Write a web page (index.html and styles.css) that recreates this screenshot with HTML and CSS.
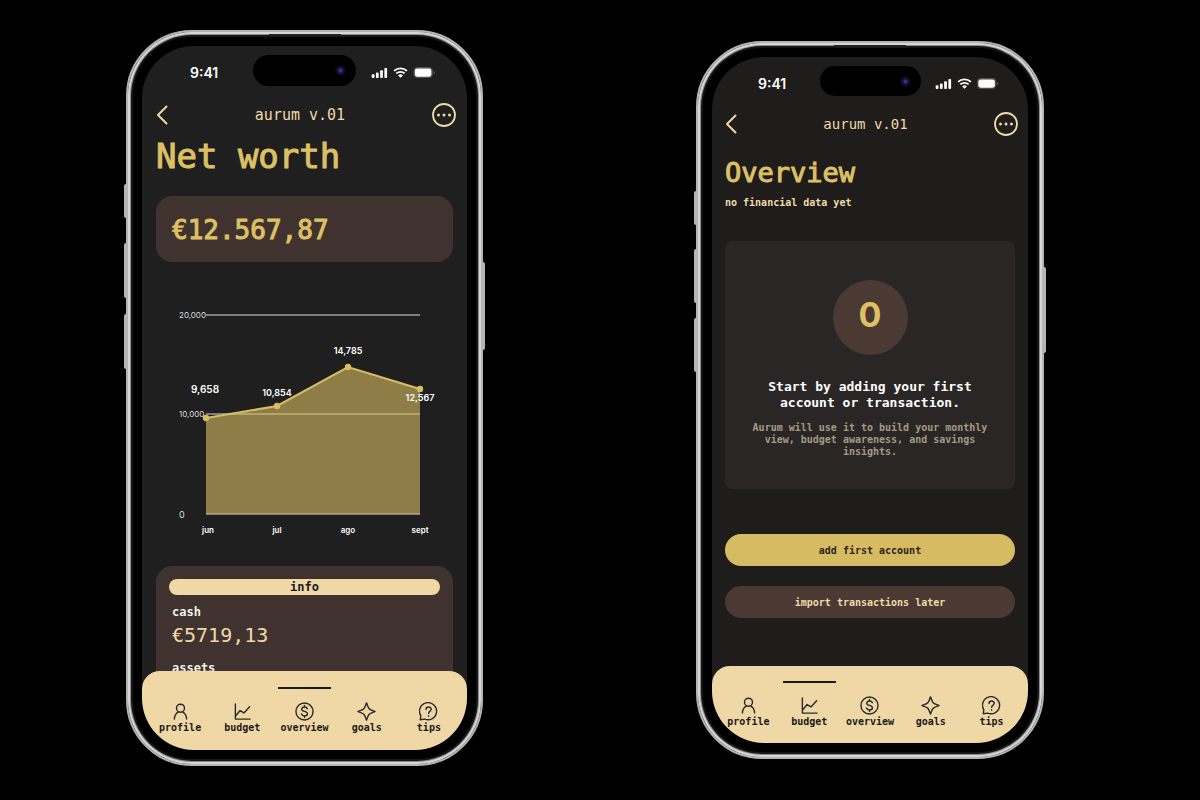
FILE: index.html
```html
<!DOCTYPE html>
<html lang="en">
<head>
    <meta charset="UTF-8">
    <meta name="viewport" content="width=device-width, initial-scale=1.0">
    <title>aurum v.01</title>
    <link rel="stylesheet" href="styles.css">
</head>
<body>

    <!-- shared icons -->
    <svg class="sprite" xmlns="http://www.w3.org/2000/svg">
        <symbol id="signal" viewBox="0 0 17 12"><rect x="0" y="8" width="3" height="4" rx="1"/><rect x="4.6" y="6" width="3" height="6" rx="1"/><rect x="9.2" y="3.5" width="3" height="8.5" rx="1"/><rect x="13.8" y="1" width="3" height="11" rx="1"/></symbol>
        <symbol id="wifi" viewBox="0 0 16 12"><path d="M1 4.2a10.4 10.4 0 0 1 14 0M3.5 7a6.6 6.6 0 0 1 9 0" fill="none" stroke="#fff" stroke-width="2"/><path d="M8 11.8 5.4 9.2a3.8 3.8 0 0 1 5.2 0z"/></symbol>
        <symbol id="battery" viewBox="0 0 24 12"><rect x=".5" y=".5" width="20" height="11" rx="3.4" fill="#444" stroke="#555"/><rect x="1.500" y="1.500" width="18" height="9" rx="2.500"/><path d="M22 4v4c1.6-.7 1.6-3.3 0-4z" fill="#666"/></symbol>
        <symbol id="back" viewBox="0 0 12 20"><path d="M10.5 1.5 2 10l8.500 8.500" fill="none" stroke="currentColor" stroke-width="2" stroke-linecap="round" stroke-linejoin="round"/></symbol>
        <symbol id="more" viewBox="0 0 24 24"><circle cx="12" cy="12" r="11" fill="none" stroke="currentColor" stroke-width="1.800"/><g fill="currentColor"><circle cx="6.500" cy="12" r="1.500"/><circle cx="12" cy="12" r="1.500"/><circle cx="17.500" cy="12" r="1.500"/></g></symbol>
        <symbol id="profile" viewBox="0 0 20 20"><circle cx="10" cy="6.500" r="4.200"/><path d="M3.600 18c0-4 1.600-6.300 4.400-7.700M16.400 18c0-4-1.600-6.300-4.400-7.700"/></symbol>
        <symbol id="budget" viewBox="0 0 20 20"><path d="M2.500 2v16H18M2.500 15l5-6 4 2.500 6-6.500"/></symbol>
        <symbol id="overview" viewBox="0 0 20 20"><circle cx="10" cy="10" r="9"/><path d="M13 7c-.4-1.200-1.500-1.700-3-1.700-1.700 0-2.900.8-2.900 2.200 0 3.200 6 1.600 6 4.800 0 1.500-1.300 2.300-3.100 2.300-1.700 0-2.800-.7-3.200-2M10 3.600v1.600M10 14.700v1.600"/></symbol>
        <symbol id="goals" viewBox="0 0 20 20"><path d="M10 1c.8 1.500 1.300 4 2.600 5.800C14 8.600 17.500 9 19 10c-1.500 1-5 1.400-6.400 3.200C11.300 15 10.800 17.500 10 19c-.8-1.500-1.300-4-2.600-5.800C6 11.400 2.500 11 1 10c1.500-1 5-1.400 6.400-3.200C8.700 5 9.200 2.500 10 1z"/></symbol>
        <symbol id="tips" viewBox="0 0 20 20"><path d="M1.300 18.700l.6-4.200A9 9 0 1 1 6 18z"/><path d="M7.400 8c0-3.700 5.400-3.400 5.400-.3 0 2.200-2.700 2.100-2.700 4.300M10.100 14.500v.4"/></symbol>
    </svg>

    <div class="container">

        <!-- net worth -->
        <section class="phone">
            <span class="side side_one"></span>
            <span class="side side_two"></span>
            <span class="side side_three"></span>
            <span class="side side_right"></span>
            <span class="speaker"></span>
            <div class="screen">
                <div class="status">
                    <span class="time">9:41</span>
                    <span class="island"><span class="camera"></span></span>
                    <span class="status_icons">
                        <svg width="17" height="11"><use href="#signal"/></svg>
                        <svg width="15" height="11"><use href="#wifi"/></svg>
                        <svg width="23" height="11"><use href="#battery"/></svg>
                    </span>
                </div>
                <header class="header">
                    <button class="icon_btn" aria-label="Back"><svg width="12" height="20"><use href="#back"/></svg></button>
                    <span class="app_name">aurum v.01</span>
                    <button class="icon_btn" aria-label="More"><svg width="24" height="24"><use href="#more"/></svg></button>
                </header>
                <main class="content">
                    <h1 class="title">Net worth</h1>
                    <div class="total">€12.567,87</div>
                    <svg class="chart" viewBox="0 0 297 250">
                        <path class="grid" d="M50 25h214M50 124h214M50 224h214"/>
                        <path class="area" d="M50 128l71-12 71-39 72 22v125H50z"/>
                        <path class="line" d="M50 128l71-12 71-39 72 22"/>
                        <g class="dots">
                            <circle cx="50" cy="128" r="3.2"/>
                            <circle cx="121" cy="116" r="3.2"/>
                            <circle cx="192" cy="77" r="3.2"/>
                            <circle cx="264" cy="99" r="3.2"/>
                        </g>
                        <g class="axis">
                            <text x="23" y="28">20,000</text>
                            <text x="23" y="127">10,000</text>
                            <text class="zero" x="23" y="228">0</text>
                        </g>
                        <g class="values">
                            <text class="first" x="49" y="103">9,658</text>
                            <text x="121" y="106">10,854</text>
                            <text x="192" y="64">14,785</text>
                            <text x="264" y="111">12,567</text>
                        </g>
                        <g class="months">
                            <text x="52" y="243">jun</text>
                            <text x="121" y="243">jul</text>
                            <text x="192" y="243">ago</text>
                            <text x="264" y="243">sept</text>
                        </g>
                    </svg>
                    <div class="details">
                        <button class="info">info</button>
                        <dl class="list">
                            <dt>cash</dt>
                            <dd>€5719,13</dd>
                            <dt>assets</dt>
                        </dl>
                    </div>
                </main>
                <nav class="nav">
                    <a href="#"><svg><use href="#profile"/></svg>profile</a>
                    <a href="#"><svg><use href="#budget"/></svg>budget</a>
                    <a href="#" class="active"><svg><use href="#overview"/></svg>overview</a>
                    <a href="#"><svg><use href="#goals"/></svg>goals</a>
                    <a href="#"><svg><use href="#tips"/></svg>tips</a>
                </nav>
            </div>
        </section>

        <!-- empty overview -->
        <section class="phone small">
            <span class="side side_one"></span>
            <span class="side side_two"></span>
            <span class="side side_three"></span>
            <span class="side side_right"></span>
            <span class="speaker"></span>
            <div class="screen">
                <div class="status">
                    <span class="time">9:41</span>
                    <span class="island"><span class="camera"></span></span>
                    <span class="status_icons">
                        <svg width="17" height="11"><use href="#signal"/></svg>
                        <svg width="15" height="11"><use href="#wifi"/></svg>
                        <svg width="22" height="11"><use href="#battery"/></svg>
                    </span>
                </div>
                <header class="header">
                    <button class="icon_btn" aria-label="Back"><svg width="12" height="20"><use href="#back"/></svg></button>
                    <span class="app_name">aurum v.01</span>
                    <button class="icon_btn" aria-label="More"><svg width="24" height="24"><use href="#more"/></svg></button>
                </header>
                <main class="content">
                    <h1 class="title">Overview</h1>
                    <p class="subtitle">no financial data yet</p>
                    <div class="empty">
                        <div class="circle">0</div>
                        <h2 class="empty_title">Start by adding your first account or transaction.</h2>
                        <p class="empty_text">Aurum will use it to build your monthly view, budget awareness, and savings insights.</p>
                    </div>
                    <div class="buttons">
                        <button class="btn gold">add first account</button>
                        <button class="btn brown">import transactions later</button>
                    </div>
                </main>
                <nav class="nav">
                    <a href="#"><svg><use href="#profile"/></svg>profile</a>
                    <a href="#" class="active"><svg><use href="#budget"/></svg>budget</a>
                    <a href="#"><svg><use href="#overview"/></svg>overview</a>
                    <a href="#"><svg><use href="#goals"/></svg>goals</a>
                    <a href="#"><svg><use href="#tips"/></svg>tips</a>
                </nav>
            </div>
        </section>

    </div>

</body>
</html>
```

FILE: styles.css
```css
*{
    box-sizing: border-box;
}
body{
    margin: 0;
    background-color: #000;
    font-family: "DejaVu Sans Mono", monospace;
}
h1, h2, p, dl, dd{
    margin: 0;
}
button{
    font-family: inherit;
    border: 0;
    padding: 0;
    cursor: pointer;
}
.sprite{
    display: none;
}
.container{
    display: flex;
    flex-wrap: wrap;
    justify-content: space-between;
    gap: 40px;
    padding: 30px 156px 30px 126px;
}

/* phone body */
.phone{
    position: relative;
    width: 357px;
    height: 736px;
    padding: 14px;
    border: 2px solid #b4b4b4;
    border-radius: 66px;
    background-color: #000;
    box-shadow: inset 0 0 0 2px #d6d6d6, inset 0 0 0 3px #8b8b8b, inset 0 0 0 5px #161616;
}
.side{
    position: absolute;
    left: -4px;
    width: 2px;
    height: 7%;
    background-color: #b5b5b5;
    border-radius: 2px 0 0 2px;
}
.side_one{
    top: 152px;
    height: 34px;
}
.side_two{
    top: 211px;
    height: 55px;
}
.side_three{
    top: 282px;
    height: 55px;
}
.side_right{
    top: 230px;
    left: auto;
    right: -4px;
    height: 88px;
    border-radius: 0 2px 2px 0;
}
.speaker{
    position: absolute;
    top: 2px;
    left: 50%;
    width: 72px;
    height: 2px;
    margin-left: -36px;
    background-color: #222;
}
.screen{
    display: flex;
    flex-direction: column;
    height: 100%;
    border-radius: 52px;
    overflow: hidden;
    background-color: #1f1f1f;
}

/* status bar */
.status{
    display: grid;
    grid-template-columns: 1fr auto 1fr;
    align-items: center;
    padding: 9px 31px 0;
    font-family: Inter, sans-serif;
    color: #fff;
}
.time{
    font-size: 14px;
    font-weight: 600;
    line-height: 20px;
    padding: 5px 0 0 17px;
}
.island{
    display: flex;
    justify-content: flex-end;
    align-items: center;
    width: 103px;
    height: 31px;
    padding-right: 10px;
    border-radius: 16px;
    background-color: #000;
}
.camera{
    width: 11px;
    height: 11px;
    border-radius: 50%;
    background: radial-gradient(#3038a8 10%, #12123c 35%, #08080c 65%);
}
.status_icons{
    display: flex;
    justify-content: flex-end;
    gap: 5px;
    padding-top: 4px;
    fill: #fff;
}

/* header */
.header{
    display: flex;
    justify-content: space-between;
    align-items: center;
    margin-top: 17px;
    padding: 0 11px 0 14px;
    color: #f0d8a6;
}
.icon_btn{
    display: flex;
    background: none;
    color: inherit;
}
.app_name{
    font-size: 15px;
    line-height: 20px;
}

.content{
    flex: 1;
    min-height: 0;
    margin-bottom: -18px;
    padding: 0 14px;
    overflow: hidden;
}
.title{
    margin-top: 9px;
    font-size: 34px;
    line-height: 40px;
    font-weight: normal;
    color: #dec064;
    -webkit-text-stroke: 1px #dec064;
}
.total{
    margin-top: 20px;
    padding: 18px 16px 16px;
    border-radius: 16px;
    background-color: #40332f;
    color: #dec064;
    font-size: 26px;
    line-height: 32px;
    -webkit-text-stroke: 1px #dec064;
}

/* chart */
.chart{
    display: block;
    width: 100%;
    margin-top: 28px;
    font-family: Inter, sans-serif;
    font-size: 8px;
    fill: #fff;
}
.grid{
    stroke: #ddd;
}
.area{
    fill: #d8bd62;
    fill-opacity: 0.6;
}
.line{
    fill: none;
    stroke: #d8bd62;
    stroke-width: 2px;
}
.dots{
    fill: #d8bd62;
}
.axis{
    fill: #ddd;
}
.zero{
    font-size: 9px;
}
.values, .months{
    font-weight: 600;
    text-anchor: middle;
}
.values{
    font-size: 9px;
}
.first{
    font-size: 10px;
}

.details{
    margin-top: 26px;
    padding: 13px;
    border-radius: 16px;
    background-color: #40332f;
}
.info{
    display: block;
    width: 100%;
    height: 16px;
    border-radius: 8px;
    background-color: #f0d8a6;
    color: #1b1b1b;
    font-size: 12px;
    line-height: 16px;
    font-weight: bold;
}
.list{
    padding: 9px 3px;
}
.list dt{
    color: #f4f1ee;
    font-size: 12px;
    line-height: 16px;
    font-weight: bold;
}
.list dd{
    margin: 2px 0 12px;
    color: #f0d8a6;
    font-size: 20px;
    line-height: 26px;
}

/* bottom nav */
.nav{
    position: relative;
    display: grid;
    grid-template-columns: repeat(5, 1fr);
    padding: 16px 7px 15px;
    border-radius: 18px 18px 0 0;
    background-color: #f0d8a6;
}
.nav a{
    display: flex;
    flex-direction: column;
    align-items: center;
    padding-top: 13px;
    border-top: 2px solid transparent;
    color: #1b1b1b;
    font-size: 10px;
    line-height: 14px;
    font-weight: bold;
    text-decoration: none;
}
.nav a.active{
    border-image: linear-gradient(to right, transparent 10%, #1b1b1b 10% 90%, transparent 90%) 2;
}
.nav svg{
    width: 19px;
    height: 19px;
    fill: none;
    stroke: #2b2b2e;
    stroke-width: 1.5px;
    stroke-linecap: round;
    stroke-linejoin: round;
}

/* second phone */
.small{
    width: 348px;
    height: 718px;
    margin-top: 11px;
}
.small .side_one{
    top: 148px;
}
.small .side_two{
    top: 206px;
    height: 54px;
}
.small .side_three{
    top: 275px;
    height: 54px;
}
.small .side_right{
    top: 224px;
    height: 86px;
}
.small .screen{
    background-color: #1e1d1b;
}
.small .status{
    padding: 9px 29px 0;
}
.small .island{
    width: 101px;
    height: 30px;
}
.small .header{
    margin-top: 16px;
    padding: 0 10px 0 13px;
}
.small .app_name{
    font-size: 14px;
}
.small .content{
    padding: 0 13px;
}
.small .title{
    margin-top: 21px;
    font-size: 27px;
    line-height: 32px;
}
.subtitle{
    margin-top: 6px;
    color: #f0d8a6;
    font-size: 10px;
    line-height: 16px;
    font-weight: bold;
}
.empty{
    display: flex;
    flex-direction: column;
    align-items: center;
    margin-top: 30px;
    padding: 39px 26px 31px;
    border-radius: 8px;
    background-color: #2a2625;
    text-align: center;
}
.circle{
    width: 75px;
    height: 75px;
    border-radius: 50%;
    background-color: #4a3a33;
    color: #dec064;
    font-family: Inter, sans-serif;
    font-size: 34px;
    line-height: 70px;
    font-weight: bold;
}
.empty_title{
    margin-top: 24px;
    color: #fff;
    font-size: 13px;
    line-height: 16px;
    font-weight: bold;
}
.empty_text{
    margin-top: 11px;
    color: #a39982;
    font-size: 10px;
    line-height: 12px;
    font-weight: bold;
}
.buttons{
    display: flex;
    flex-direction: column;
    gap: 20px;
    margin-top: 45px;
}
.btn{
    height: 32px;
    border-radius: 16px;
    font-size: 10px;
    font-weight: bold;
}
.gold{
    background-color: #d7bb63;
    color: #2a2618;
}
.brown{
    background-color: #4a3a33;
    color: #f0d8a6;
}
.small .nav{
    padding: 15px 6px 14px;
}
```
